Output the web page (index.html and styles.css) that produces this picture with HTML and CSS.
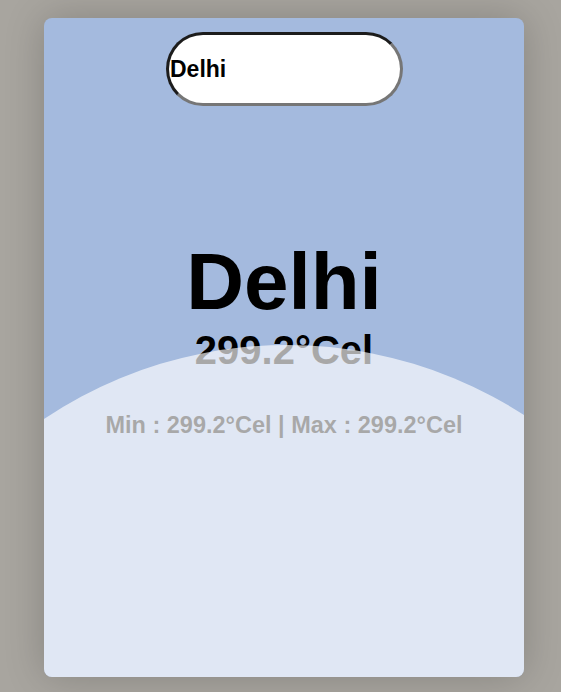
FILE: index.html
```html
<!DOCTYPE html>
<html lang="en">
<head>
<meta charset="utf-8">
<title>Weather</title>
<link rel="stylesheet" href="styles.css">
</head>
<body>
  <main class="card">
    <input class="search" type="text" value="Delhi">
    <h1 class="city">Delhi</h1>
    <p class="temp">299.2°Cel</p>
    <p class="range">Min : 299.2°Cel | Max : 299.2°Cel</p>
    <div class="wave"></div>
  </main>
</body>
</html>
```
FILE: styles.css
```css
html, body {
  margin: 0;
  height: 100%;
}
body {
  background: #a8a59f;
  font-family: "Liberation Sans", Arial, sans-serif;
  padding: 18px 37px 15px 44px;
  box-sizing: border-box;
  display: flex;
}
.card {
  position: relative;
  flex: 1;
  background: #a4bade;
  border-radius: 8px;
  overflow: hidden;
  box-shadow: 0 0 40px rgba(0, 0, 0, 0.2);
  display: flex;
  flex-direction: column;
  align-items: center;
  padding-top: 14px;
}
.search {
  box-sizing: border-box;
  width: 237px;
  height: 74px;
  border-radius: 40px;
  border: 3px solid;
  border-color: #1c1c1c #767676 #767676 #1c1c1c;
  background: #fff;
  padding: 0 0 0 1px;
  margin: 0 0 0 1px;
  font-family: "Liberation Sans", Arial, sans-serif;
  font-weight: bold;
  font-size: 23px;
  color: #000;
  outline: none;
}
.city {
  margin: 136px 0 0;
  font-size: 80px;
  line-height: 80px;
  font-weight: bold;
}
.temp {
  margin: 8px 0 0;
  font-size: 40px;
  line-height: 40px;
  font-weight: bold;
}
.range {
  margin: 44px 0 0;
  font-size: 23.5px;
  line-height: 23.5px;
  font-weight: bold;
}
.wave {
  position: absolute;
  left: -193px;
  top: 327px;
  width: 872px;
  height: 872px;
  border-radius: 50%;
  background: rgba(255, 255, 255, 0.66);
}
```
